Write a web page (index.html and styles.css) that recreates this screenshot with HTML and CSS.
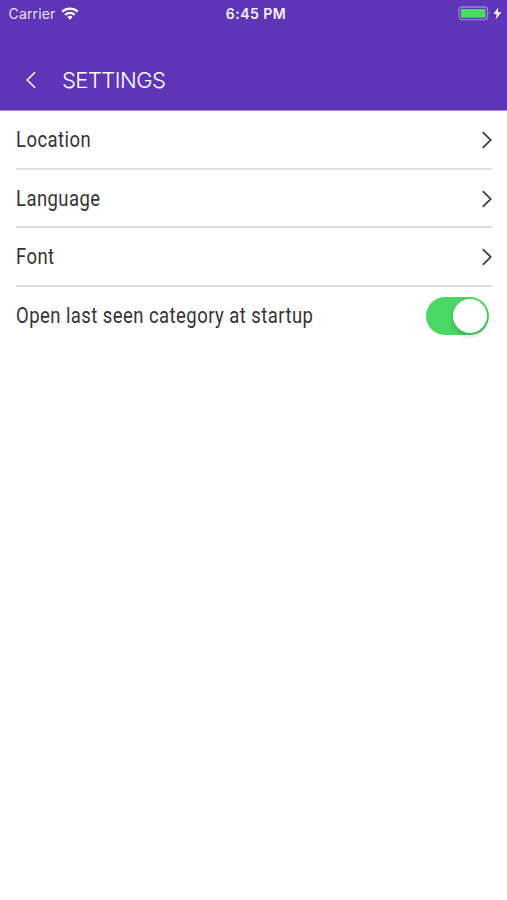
FILE: index.html
```html
<!DOCTYPE html>
<html lang="en">
<head>
<meta charset="utf-8">
<meta name="viewport" content="width=device-width, initial-scale=1">
<title>Settings</title>
<link rel="stylesheet" href="styles.css">
</head>
<body>
<header class="header">
  <div class="status">
    <div class="carrier"><span>Carrier</span>
      <svg class="wifi" width="18" height="13" viewBox="0 0 18 13" fill="none" stroke="#fff" stroke-width="2.3"><path d="M1.2 4.7a11.2 11.2 0 0 1 15.6 0M4.2 7.8a6.9 6.9 0 0 1 9.6 0"/><path d="M9 12.7 6.4 10a3.8 3.8 0 0 1 5.2 0Z" fill="#fff" stroke="none"/></svg>
    </div>
    <div class="clock">6:45 PM</div>
    <div class="power">
      <svg width="44" height="16" viewBox="0 0 44 16"><rect x="1" y="1" width="28.5" height="12.6" rx="3" fill="none" stroke="#9c83d8" stroke-width="1.3"/><rect x="2.8" y="2.9" width="24.8" height="8.9" rx="1.2" fill="#4cda65"/><path d="M31 5.3q1.7 2 0 4Z" fill="#9c83d8"/><path d="M40.3 1.5 35.5 8.1h3.3L37.5 13.5 43.4 6.3h-3.5Z" fill="#fff"/></svg>
    </div>
  </div>
  <div class="nav">
    <svg class="back" width="12" height="18" viewBox="0 0 12 18" fill="none" stroke="#fff" stroke-width="1.5"><path d="M10 1.2 2.2 9l7.8 7.8"/></svg>
    <h1 class="title">SETTINGS</h1>
  </div>
</header>
<main class="list">
  <div class="row"><span class="label">Location</span><svg class="chevron" width="12" height="18" viewBox="0 0 12 18"><path d="m2.8 1.2 8 7.8-8 7.8"/></svg></div>
  <div class="row"><span class="label">Language</span><svg class="chevron" width="12" height="18" viewBox="0 0 12 18"><path d="m2.8 1.2 8 7.8-8 7.8"/></svg></div>
  <div class="row"><span class="label">Font</span><svg class="chevron" width="12" height="18" viewBox="0 0 12 18"><path d="m2.8 1.2 8 7.8-8 7.8"/></svg></div>
  <div class="row"><span class="label">Open last seen category at startup</span><span class="switch"><span class="knob"></span></span></div>
</main>
</body>
</html>
```
FILE: styles.css
```css
* { box-sizing: border-box; }
body { margin: 0; min-height: 900px; background: #fff; font-family: Roboto, sans-serif; }
.header { height: 111px; background: #5d35b6; border-bottom: 1px solid #a48bd7; color: #fff; font-family: Inter, sans-serif; }
.status { height: 27px; display: grid; grid-template-columns: 1fr auto 1fr; align-items: center; padding: 0 5px 0 8px; }
.carrier { display: flex; align-items: center; gap: 6px; padding-left: .5px; font-size: 14px; line-height: 17px; letter-spacing: .15px; color: #e9e1fa; }
.wifi { display: block; }
.clock { padding-left: 2px; font-size: 14px; line-height: 17px; font-weight: 600; letter-spacing: .5px; color: #f7f2ff; }
.power { display: flex; justify-content: flex-end; }
.nav { height: 83px; display: flex; align-items: center; padding: 22px 0 0 25px; }
.back { display: block; }
.title { margin: 0 0 0 25px; font-size: 22px; line-height: 26px; font-weight: 350; letter-spacing: -.55px; }
.list { padding: 0 15px 0 16px; }
.row { height: 58.7px; padding-top: 2px; display: flex; align-items: center; justify-content: space-between; border-bottom: 2px solid #dedede; }
.row:nth-child(3) { padding-top: 1px; }
.row:last-child { padding-top: 0; height: 57.7px; border: 0; }
.label { font-size: 22px; line-height: 28px; color: #343434; white-space: nowrap; letter-spacing: .53px; transform: scaleX(.84); transform-origin: left; }
.chevron { display: block; fill: none; stroke: #3e3e3e; stroke-width: 1.8; }
.switch { width: 63px; height: 38px; margin-right: 3px; border-radius: 19px; background: #4bd763; display: flex; align-items: center; justify-content: flex-end; padding: 2px; }
.knob { width: 34px; height: 34px; border-radius: 50%; background: #fff; box-shadow: 0 3px 5px rgba(0,0,0,.2); }
```
